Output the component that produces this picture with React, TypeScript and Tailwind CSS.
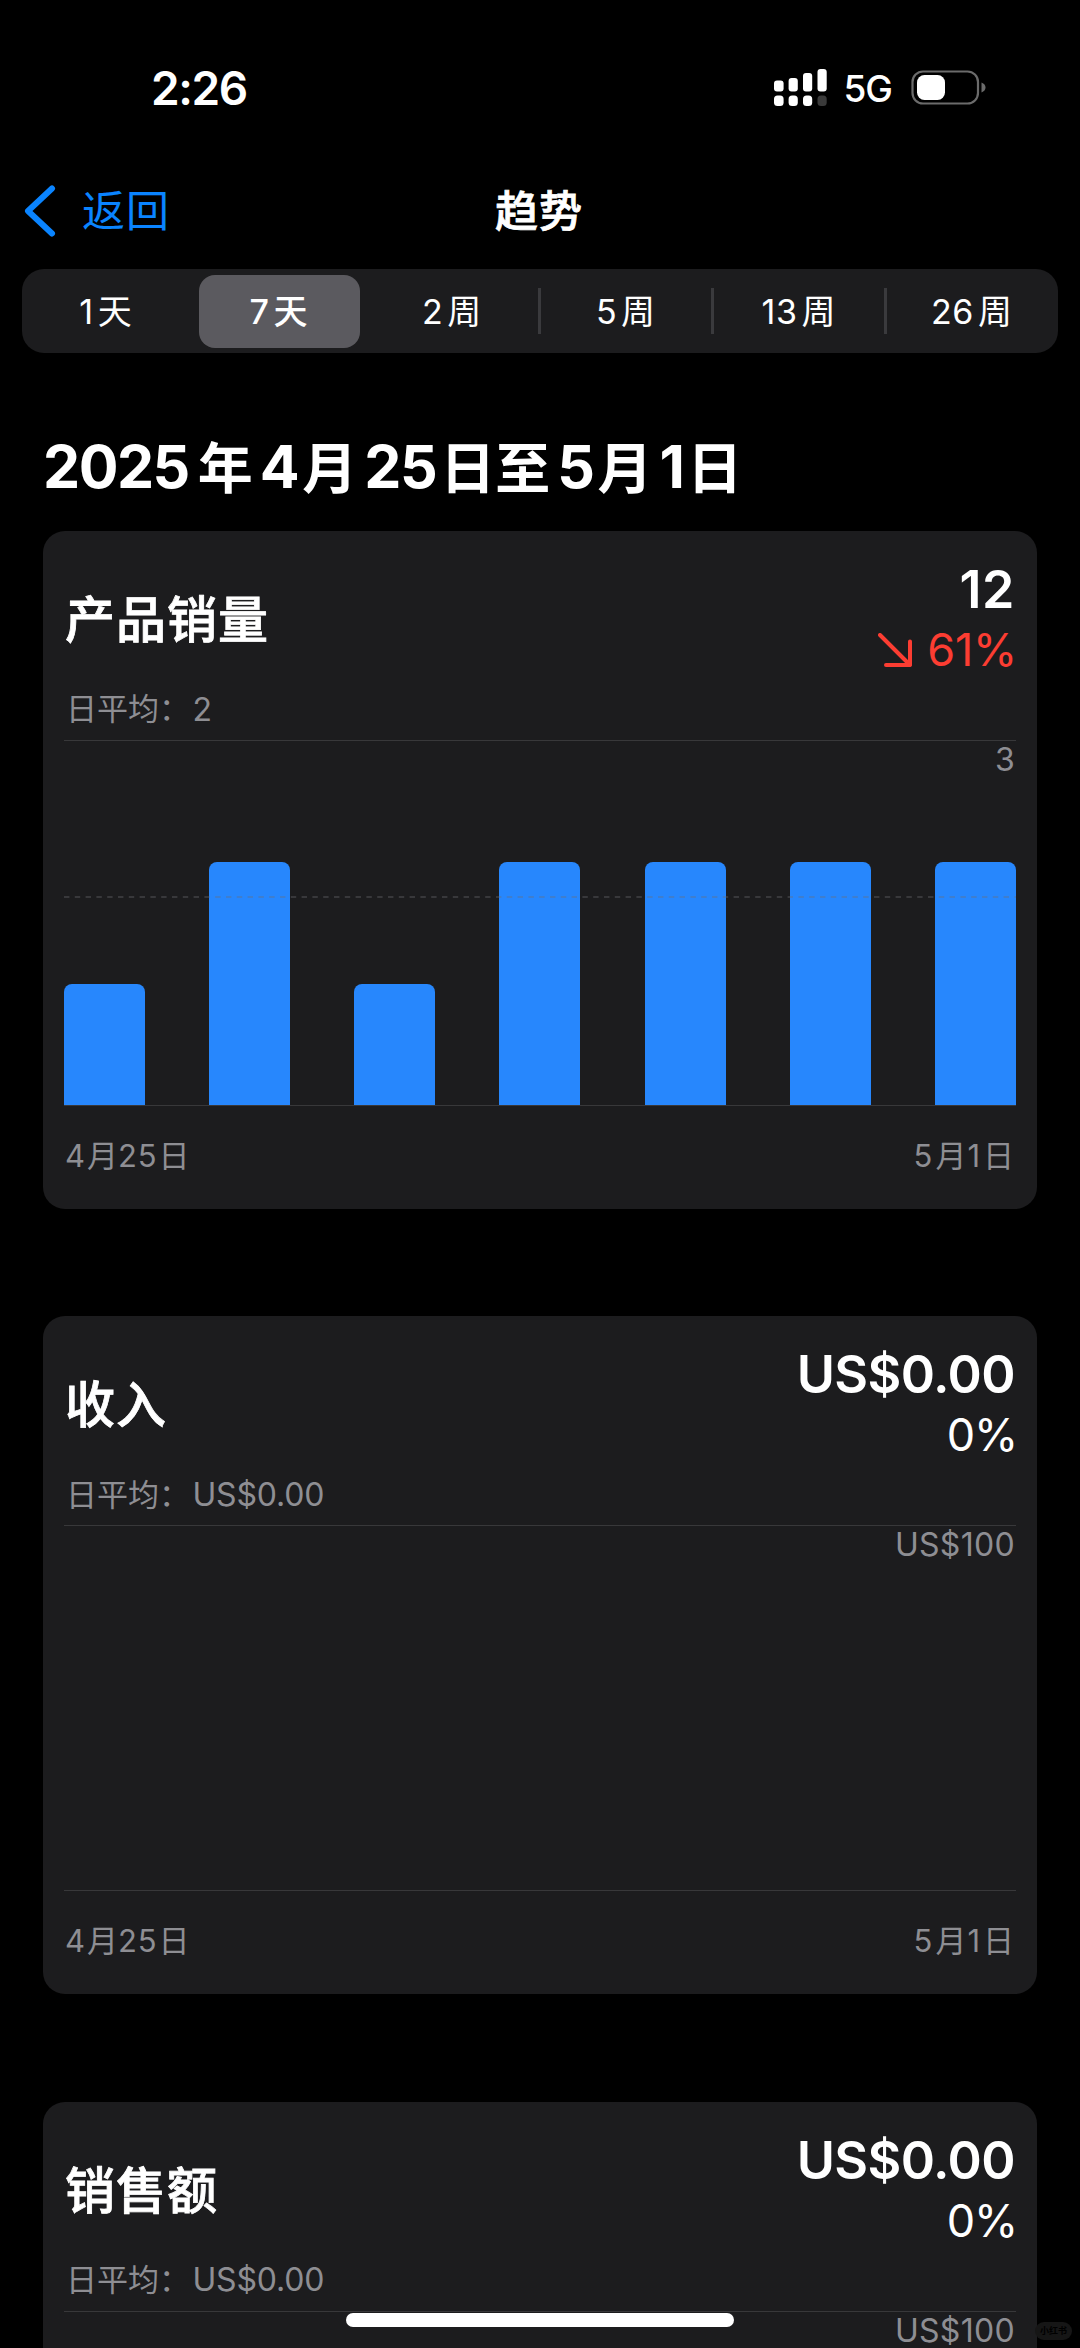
import { useState } from "react";

type Metric = {
  title: string;
  total: string;
  change: string;
  down?: boolean;
  average: string;
  max: string;
  scale: number;
  values: number[];
  averageLine?: number;
};

const RANGES = ["1天", "7天", "2周", "5周", "13周", "26周"];

const METRICS: Metric[] = [
  {
    title: "产品销量",
    total: "12",
    change: "61%",
    down: true,
    average: "2",
    max: "3",
    scale: 3,
    values: [1, 2, 1, 2, 2, 2, 2],
    averageLine: 12 / 7,
  },
  {
    title: "收入",
    total: "US$0.00",
    change: "0%",
    average: "US$0.00",
    max: "US$100",
    scale: 100,
    values: [],
  },
  {
    title: "销售额",
    total: "US$0.00",
    change: "0%",
    average: "US$0.00",
    max: "US$100",
    scale: 100,
    values: [],
  },
];

// Adds a little air between digits and the Chinese characters next to them
function Spaced({ text, digits }: { text: string; digits: string }) {
  return (
    <>
      {text.split(/(\d+)/).map((part, i) =>
        /\d/.test(part) ? (
          <span key={i} className={digits}>
            {part}
          </span>
        ) : (
          part
        ),
      )}
    </>
  );
}

function StatusBar() {
  return (
    <div className="flex h-[175px] items-center justify-between pr-[94px] pl-[151px]">
      <span className="text-[46px] leading-[60px] font-semibold tracking-[-1.4px]">2:26</span>
      <div className="flex items-center">
        <svg width="53" height="38" viewBox="0 0 53 38" fill="#fff">
          <rect x="0" y="11.5" width="9.6" height="11" rx="3" />
          <rect x="14.6" y="9" width="9.2" height="13.5" rx="3" />
          <rect x="29" y="4" width="9.2" height="18.5" rx="3" />
          <rect x="43.5" y="0" width="9.2" height="22.5" rx="3" />
          <rect x="0" y="26.5" width="9.6" height="10.5" rx="3.5" />
          <rect x="14.6" y="26.5" width="9.2" height="10.5" rx="3.5" />
          <rect x="29" y="26.5" width="9.2" height="10.5" rx="3.5" />
          <rect x="43.5" y="26.5" width="9.2" height="10.5" rx="3.5" fill="#3a3a3a" />
        </svg>
        <span className="mt-[3px] ml-[16px] text-[37px] leading-[40px] font-medium tracking-[-1px]">
          5G
        </span>
        <svg className="ml-[19px]" width="75" height="35" viewBox="0 0 75 35">
          <rect
            x="1.5"
            y="1.5"
            width="65.5"
            height="32"
            rx="10.5"
            fill="none"
            stroke="#6b6b6b"
            strokeWidth="2.2"
          />
          <rect x="6" y="5" width="28" height="25" rx="7.5" fill="#fff" />
          <path d="M70.500 12.500c2.600 1 4 2.800 4 5s-1.400 4-4 5z" fill="#6b6b6b" />
        </svg>
      </div>
    </div>
  );
}

function NavBar() {
  return (
    <div className="grid h-[72px] grid-cols-3 items-center">
      <button className="flex items-center pl-[24px] text-[#0a84ff]">
        <svg width="32" height="52" viewBox="0 0 32 52" fill="none">
          <path
            d="M28 3.500L4 26l24 22.500"
            stroke="currentColor"
            strokeWidth="6"
            strokeLinecap="round"
            strokeLinejoin="round"
          />
        </svg>
        <span className="ml-[26px] text-[43px] leading-[60px] tracking-[1px]">返回</span>
      </button>
      <h1 className="pr-[2px] text-center text-[43px] leading-[60px] font-medium tracking-[1px] [-webkit-text-stroke:0.8px]">
        趋势
      </h1>
    </div>
  );
}

function RangeTabs() {
  const [selected, setSelected] = useState(1);

  return (
    <div className="mx-[22px] mt-[22px] h-[84px] rounded-[22px] bg-[#1c1c1e]">
      <div className="-ml-[2px] grid h-full grid-cols-6 items-center">
        {RANGES.map((label, i) => (
          <div
            key={label}
            className={
              "flex h-[46px] items-center justify-center " +
              (i > 2 ? "-ml-[1px] border-l-[3px] border-[#3a3a3d]" : "")
            }
          >
            <button
              onClick={() => setSelected(i)}
              className={
                "h-[73px] w-[161px] shrink-0 rounded-[16px] pr-[2px] text-[34px] " +
                (selected === i ? "bg-[#5b5a5f] font-medium" : "")
              }
            >
              <Spaced text={label} digits="mr-[4px] tracking-[0.5px]" />
            </button>
          </div>
        ))}
      </div>
    </div>
  );
}

function Chart({ values, scale, max, averageLine }: Pick<Metric, "values" | "scale" | "max" | "averageLine">) {
  return (
    <div className="relative h-[366px] border-y border-[#38383a]">
      <div className="flex h-full items-end justify-between">
        {values.map((v, i) => (
          <div
            key={i}
            className="w-[81px] rounded-t-[8px] bg-[#2787fd]"
            style={{ height: `${(v / scale) * 100}%` }}
          />
        ))}
      </div>
      <span className="absolute top-0 right-[1px] text-[32px] leading-[38px] tracking-[0.3px] text-[#8e8e93]">
        {max}
      </span>
      {averageLine && (
        <svg
          className="absolute left-0 h-[2px] w-full translate-y-[1px]"
          style={{ bottom: `${(averageLine / scale) * 100}%` }}
        >
          <line
            x1="0"
            y1="1"
            x2="952"
            y2="1"
            stroke="#6e6e73"
            strokeOpacity="0.35"
            strokeWidth="2"
            strokeDasharray="5.400 5.400"
          />
        </svg>
      )}
    </div>
  );
}

function MetricCard({ metric }: { metric: Metric }) {
  return (
    <section className="h-[678px] shrink-0 rounded-[22px] bg-[#1c1c1e] px-[21px] pt-[29px]">
      <div className="flex h-[120px] items-center justify-between">
        <h3 className="pl-[1px] text-[50px] leading-[60px] font-medium tracking-[1px] [-webkit-text-stroke:0.8px]">
          {metric.title}
        </h3>
        <div className="text-right">
          <div
            className={
              "pr-px text-[52px] leading-[60px] font-semibold " +
              (metric.total.length > 3 ? "tracking-[-0.6px]" : "tracking-[0.5px]")
            }
          >
            {metric.total}
          </div>
          <div
            className={
              "-mr-px flex items-center justify-end text-[45px] leading-[60px] " +
              (metric.down ? "tracking-[-0.2px] text-[#fc3d32]" : "tracking-[-1.2px]")
            }
          >
            {metric.down && (
              <svg className="mr-[15px]" width="34" height="34" viewBox="0 0 34 34" fill="none">
                <path
                  d="M2 2l30 30M32 8.500V32H8"
                  stroke="currentColor"
                  strokeWidth="4"
                  strokeLinecap="round"
                  strokeLinejoin="round"
                />
              </svg>
            )}
            {metric.change}
          </div>
        </div>
      </div>
      <div className="mb-[2px] flex h-[58px] items-center pt-px pl-[2px] text-[31px] text-[#8e8e93]">
        <span className="w-[126.5px]">日平均：</span>
        <span className="text-[32px] tracking-[-0.2px]">{metric.average}</span>
      </div>
      <Chart
        values={metric.values}
        scale={metric.scale}
        max={metric.max}
        averageLine={metric.averageLine}
      />
      <div className="flex h-[100px] items-center justify-between pr-[2px] pl-[1px] text-[31px] text-[#8e8e93]">
        <span>
          <Spaced text="4月25日" digits="mr-[1px] tracking-[0.9px]" />
        </span>
        <span>
          <Spaced text="5月1日" digits="mr-[2px] ml-[1px] tracking-[1px]" />
        </span>
      </div>
    </section>
  );
}

export default function App() {
  return (
    <div className="relative h-[2348px] w-[1080px] overflow-hidden bg-black font-[Inter,'Noto_Sans_CJK_SC',sans-serif] text-white">
      <StatusBar />
      <NavBar />
      <RangeTabs />
      <main className="mx-[43px] mt-[69px]">
        <h2 className="mb-[18px] text-[55px] leading-[90px] font-bold">
          <Spaced
            text="2025年4月25日至5月1日"
            digits="mr-[4px] ml-[7px] text-[59px] tracking-[-1.5px] first:mr-[9px] first:ml-0"
          />
        </h2>
        <div className="flex flex-col gap-[107.3px]">
          {METRICS.map((m) => (
            <MetricCard key={m.title} metric={m} />
          ))}
        </div>
      </main>
      <div className="absolute top-[2313px] left-[346px] h-[14px] w-[388px] rounded-full bg-white" />
      <div className="absolute top-[2322px] left-[1035px] flex h-[18px] w-[37px] items-center justify-center rounded-full bg-[#161616] text-[9px] font-bold text-black">
        小红书
      </div>
    </div>
  );
}
